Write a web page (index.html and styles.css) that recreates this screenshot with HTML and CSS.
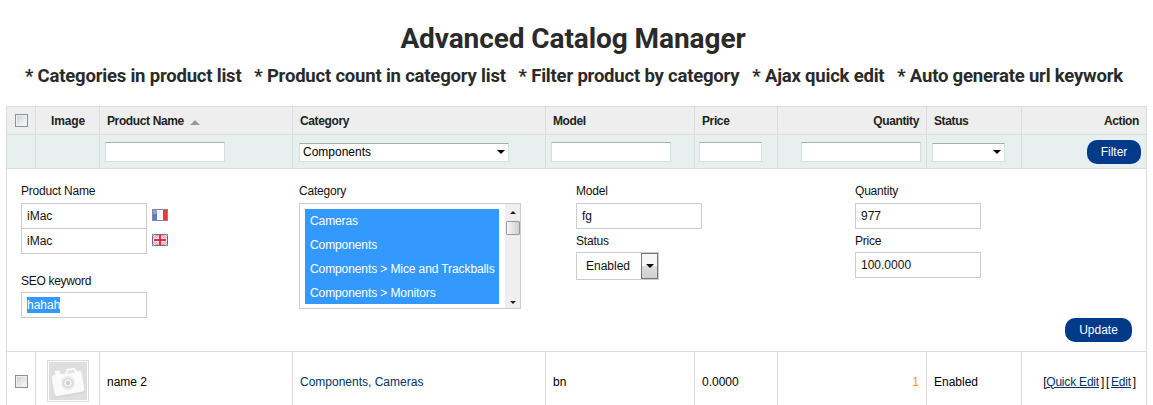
FILE: index.html
```
<!DOCTYPE html>
<html lang="en">
<head>
<meta charset="utf-8">
<title>Advanced Catalog Manager</title>
<link rel="stylesheet" href="styles.css">
</head>
<body>
<header class="banner">
  <h1 class="title"><span>Advanced Catalog Manager</span></h1>
  <p class="features"><span>* Categories in product list</span><span>* Product count in category list</span><span>* Filter product by category</span><span>* Ajax quick edit</span><span>* Auto generate url keywork</span></p>
</header>
<main class="list">
  <div class="row head">
    <div class="cell check"><i class="box"></i></div>
    <div class="cell center">Image</div>
    <div class="cell">Product Name<i class="sort"></i></div>
    <div class="cell">Category</div>
    <div class="cell">Model</div>
    <div class="cell">Price</div>
    <div class="cell right">Quantity</div>
    <div class="cell">Status</div>
    <div class="cell right">Action</div>
  </div>
  <div class="row filter">
    <div class="cell"></div>
    <div class="cell"></div>
    <div class="cell"><div class="input w-text"></div></div>
    <div class="cell"><div class="input select w-category">Components<i class="down"></i></div></div>
    <div class="cell"><div class="input w-text"></div></div>
    <div class="cell"><div class="input w-price"></div></div>
    <div class="cell right"><div class="input w-text"></div></div>
    <div class="cell"><div class="input select w-status"><i class="down"></i></div></div>
    <div class="cell right"><a class="button">Filter</a></div>
  </div>
  <section class="edit">
    <div class="group product">
      <label>Product Name</label>
      <div class="line"><div class="field">iMac</div>
        <svg class="flag" width="16" height="12" viewBox="0 0 16 12"><rect width="16" height="12" fill="#8c7fa0"/><path d="M1 1h4v10H1z" fill="#527fd0"/><path d="M1 1h4v4H1z" fill="#80a4e2"/><path d="M5 1h6v10H5z" fill="#f6f4f4"/><path d="M11 1h4v10h-4z" fill="#e63b3d"/></svg>
      </div>
      <div class="line second"><div class="field">iMac</div>
        <svg class="flag" width="16" height="12" viewBox="0 0 16 12"><rect width="16" height="12" fill="#71668c"/><path d="M1 1h14v10H1z" fill="#b9aed0"/><path d="M1 1l14 10M15 1L1 11" stroke="#fff" stroke-width="2"/><path d="M1 1l14 10M15 1L1 11" stroke="#e88890" stroke-width="1"/><path d="M8 1v10M1 6h14" stroke="#fbe6ea" stroke-width="3.4"/><path d="M8 1v10M2 6h12" stroke="#e52b3a" stroke-width="2"/></svg>
      </div>
      <label class="seo">SEO keyword</label>
      <div class="field"><span class="selected">hahah</span></div>
    </div>
    <div class="group category">
      <label>Category</label>
      <div class="listbox">
        <ul class="options"><li>Cameras</li><li>Components</li><li class="long">Components &gt; Mice and Trackballs</li><li>Components &gt; Monitors</li></ul>
        <div class="scrollbar"><i class="arrow up"></i><i class="thumb"></i><i class="arrow bottom"></i></div>
      </div>
    </div>
    <div class="group model">
      <label>Model</label>
      <div class="field">fg</div>
      <label class="next">Status</label>
      <div class="dropdown"><span>Enabled</span><b><i class="down"></i></b></div>
    </div>
    <div class="group stock">
      <label>Quantity</label>
      <div class="field">977</div>
      <label class="next">Price</label>
      <div class="field">100.0000</div>
    </div>
    <a class="button update">Update</a>
  </section>
  <div class="row item">
    <div class="cell check"><i class="box"></i></div>
    <div class="cell center"><div class="thumbnail">
      <svg width="38" height="38" viewBox="0 0 38 38"><rect width="38" height="38" fill="#dedede"/><g transform="rotate(-10 19 21)"><path d="M8 11V8q0-1 1-1h3q1 0 1 1v3h5l2-4h8l2 4h2q2 0 2 2v17q0 2-2 2H6q-2 0-2-2V13q0-2 2-2z" fill="#fbfbfb"/><path d="M21 9h6l1 3h-8z" fill="#e3e3e3"/><path d="M4 30v1q0 2 2 2h26q2 0 2-2" fill="none" stroke="#cfcfcf" stroke-width=".7"/><circle cx="19" cy="21" r="7.2" fill="#ededed"/><circle cx="19" cy="21" r="5.2" fill="#d8d8d8"/><circle cx="19" cy="21" r="3.7" fill="#f5f5f5"/><circle cx="19" cy="21" r="2.2" fill="#d0d0d0"/></g></svg>
    </div></div>
    <div class="cell">name 2</div>
    <div class="cell navy">Components, Cameras</div>
    <div class="cell">bn</div>
    <div class="cell">0.0000</div>
    <div class="cell right low">1</div>
    <div class="cell">Enabled</div>
    <div class="cell right actions"><span>[<a>Quick Edit</a> ] [ <a>Edit</a> ]</span></div>
  </div>
</main>
</body>
</html>
```
FILE: styles.css
```
* { box-sizing: border-box; }
html, body { height: 405px; overflow: hidden; }
body { margin: 0; background: #fff; color: #111; font: 12px/16px "Liberation Sans", Arial, sans-serif; }
i { display: block; flex: none; }
.banner { height: 106px; padding-top: 21px; color: #2a2a2a; font-family: Roboto, sans-serif; font-weight: 700; }
.title { margin: 0; padding-right: 7px; text-align: center; font-size: 28px; line-height: 36px; font-weight: 700; letter-spacing: -.08px; }
.features { display: flex; justify-content: space-between; margin: 7px 30px 0 25px; font-size: 18.5px; line-height: 24px; white-space: nowrap; letter-spacing: -.2px; }

.list { width: 1141px; margin-left: 6px; border: 1px solid #dcdcdc; border-width: 1px 0 0 1px; }
.row { display: grid; grid-template-columns: 29px 64px 193px 253px 149px 83px 149px 95px 125px; border-bottom: 1px solid #dcdcdc; }
.cell { display: flex; align-items: center; padding: 0 7px; border-right: 1px solid #dcdcdc; white-space: nowrap; }
.center { justify-content: center; padding: 0; }
.right { justify-content: flex-end; }
.check { padding-left: 8px; }
.head { height: 28px; background: #eee; color: #222; font-weight: 700; letter-spacing: -.38px; }
.head .center { letter-spacing: -.1px; padding-left: 1px; }
.box { width: 13px; height: 13px; border: 1px solid #8e8f8f; background: linear-gradient(135deg, #c9cdd2, #f4f4f4 80%); box-shadow: inset 0 0 0 1px #f0f0f0; }
.sort { margin: 3px 0 0 6px; border: solid transparent; border-width: 0 5px 5px; border-bottom-color: #999; }

.filter { height: 34px; background: #e7efef; }
.filter .cell { padding: 0 5px; }
.input { height: 20px; border: 1px solid #d8dddd; border-top-color: #abadb3; background: #fff; }
.w-text { width: 120px; }
.w-category { width: 210px; margin-left: 1px; }
.w-price { width: 63px; margin-left: -1px; }
.w-status { width: 73px; }
.select { display: flex; align-items: center; height: 19px; margin-top: 1px; padding: 0 3px; color: #000; }
.down { margin-left: auto; border: solid transparent; border-width: 4px 4px 0; border-top-color: #000; }
.button { width: 54px; height: 24px; border-radius: 10px; background: #003a88; color: #fff; line-height: 24px; text-align: center; }
.filter .button { margin-top: 1px; }

.edit { display: grid; grid-template-columns: 278px 277px 279px 1fr; grid-template-rows: 149px 24px; height: 183px; padding: 0 14px 0 14px; border: solid #dcdcdc; border-width: 0 1px 1px 0; }
.group { padding-top: 14px; color: #111; }
label { display: block; height: 20px; letter-spacing: -.2px; }
.field { display: flex; align-items: center; width: 126px; height: 26px; padding: 0 5px; border: 1px solid #ccc; background: #fff; }
.line { display: flex; gap: 5px; }
.second { margin-top: -1px; }
.flag { margin-top: 6px; }
.seo { height: 19px; margin-top: 19px; letter-spacing: -.3px; }
.next { height: 19px; margin-top: 4px; }
.selected { background: #39f; color: #fff; }
.listbox { display: flex; width: 222px; height: 106px; border: 1px solid #ccc; }
.options { width: 194px; height: 95px; margin: 5px 6px 0 5px; padding: 0; overflow: hidden; background: #39f; color: #fff; list-style: none; }
.options li { height: 24px; padding-left: 5px; line-height: 24px; white-space: nowrap; letter-spacing: -.1px; }
.scrollbar { display: flex; flex-direction: column; align-items: center; width: 15px; height: 104px; padding: 7px 0 4px; background: #efefef; }
.arrow { border: solid transparent; }
.up { border-width: 0 3px 3px; border-bottom-color: #222; }
.bottom { margin-top: auto; border-width: 3px 3px 0; border-top-color: #222; }
.thumb { width: 14px; height: 14px; margin-top: 7px; border: 1px solid #999; border-radius: 1px; background: linear-gradient(90deg, #f7f7f7, #d0d0d4); }
.dropdown { display: flex; align-items: center; justify-content: space-between; width: 83px; height: 28px; padding-left: 9px; border: 1px solid #ccc; }
.dropdown b { display: flex; align-items: center; width: 17px; height: 26px; padding: 0 4px; border: 1px solid #777; background: linear-gradient(#f6f6f6 50%, #ddd 50%, #d0d0d0); }
.update { grid-column: 4; justify-self: end; width: 67px; }

.item { height: 60px; color: #000; }
.thumbnail { width: 42px; height: 42px; margin-top: -1px; padding: 1px; border: 1px solid #ddd; }
.thumbnail svg { display: block; }
.navy { color: #003366; }
.low { color: #ff9900; }
.item .actions { padding-right: 10px; letter-spacing: -.2px; word-spacing: -1.2px; }
.actions a { color: #003366; text-decoration: underline; word-spacing: 0; }
```
